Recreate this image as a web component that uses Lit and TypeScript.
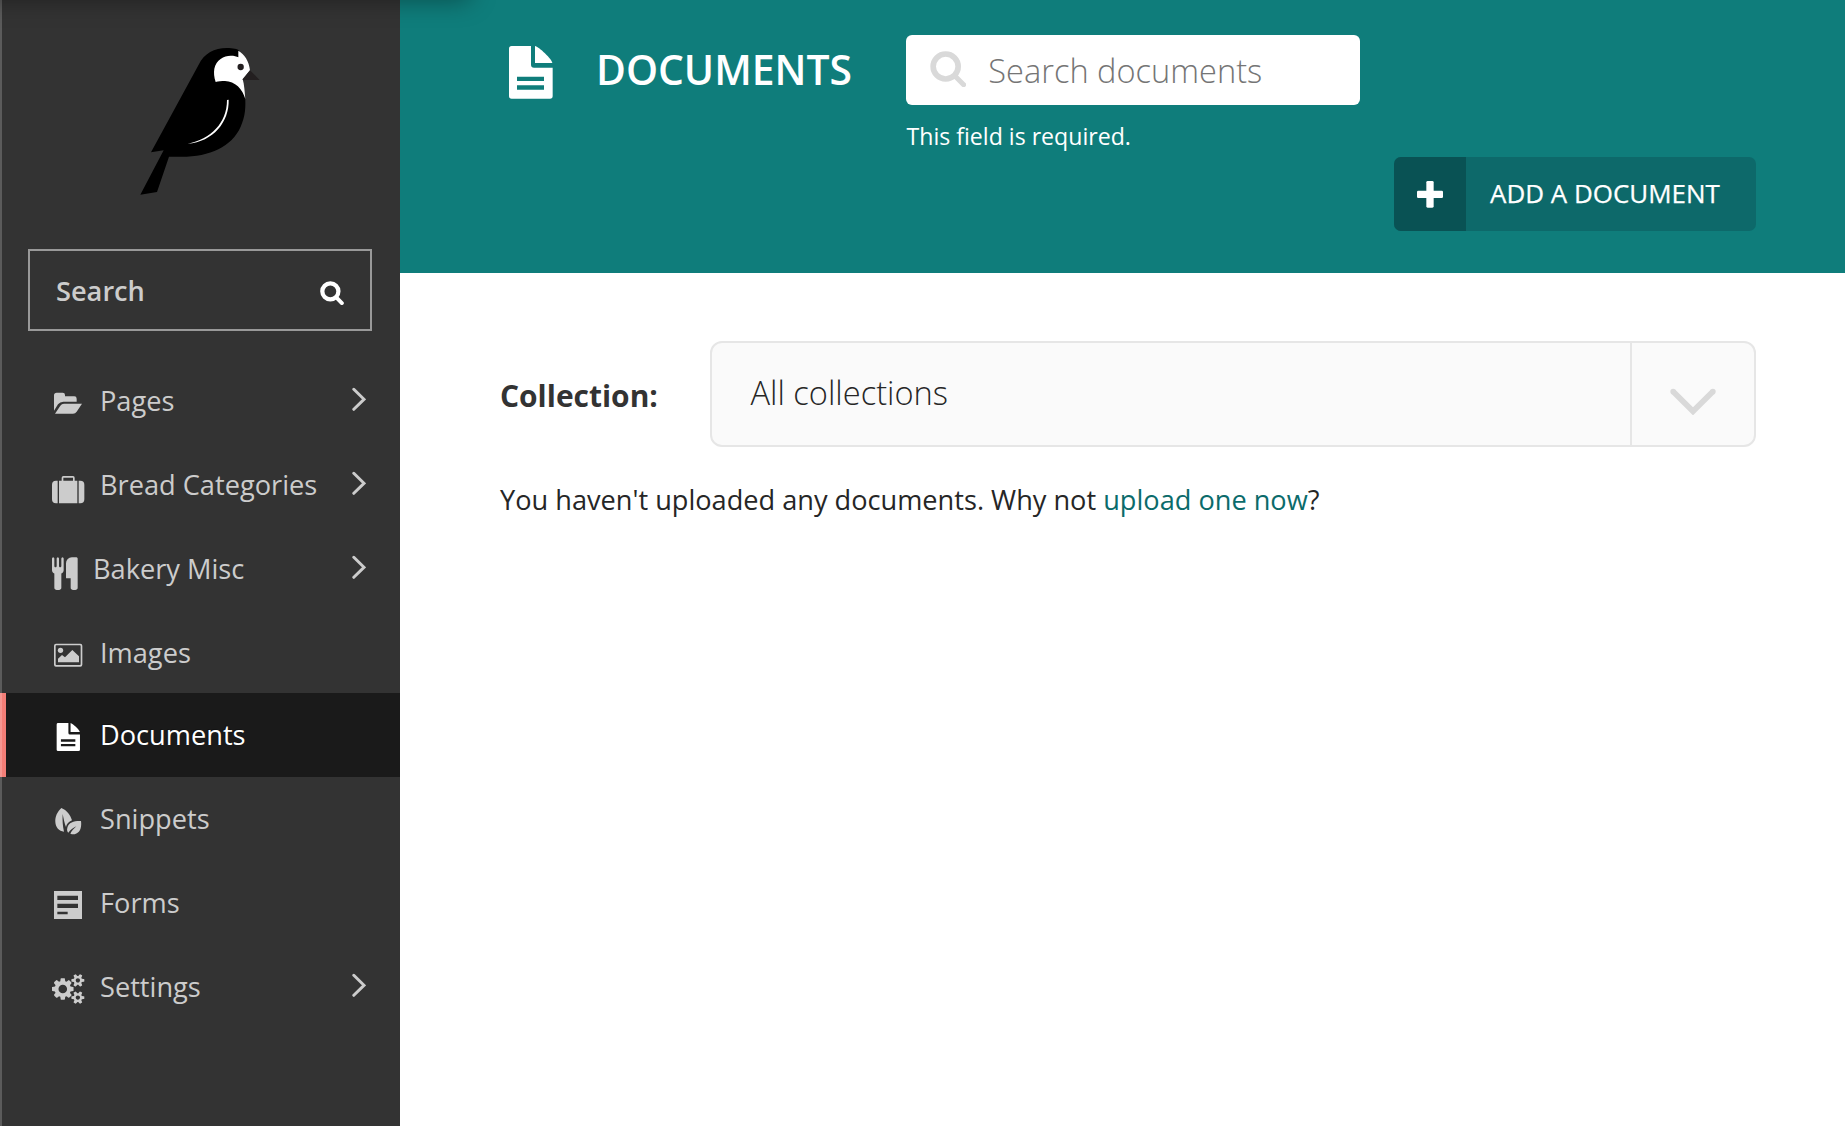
import { LitElement, html, svg, css, nothing, TemplateResult, SVGTemplateResult } from "lit";
import { customElement } from "lit/decorators.js";
import { classMap } from "lit/directives/class-map.js";

interface Icon {
  box: string;
  art: SVGTemplateResult;
}

interface NavItem {
  label: string;
  icon: Icon;
  submenu?: boolean;
  active?: boolean;
  narrow?: boolean;
  tight?: boolean;
}

const documentShape = svg`
  <path d="M165 78C176 80 216 117 217 129H165z"/>
  <path fill-rule="evenodd" d="M95 78H153V134q0 9 9 9H218V228q0 8-8 8H95q-8 0-8-8V86q0-8 8-8zM111 170V183H192V170zM111 196V209H192V196z"/>`;

const icons: Record<string, Icon> = {
  folder: {
    box: "156 468 99 102",
    art: svg`<path d="M162 542V496q0-8 8-8H188q7 0 7 7V499H223q7 0 7 7V515H190q-10 0-16 8z"/>
      <path d="M165 551L181 527q4-6 11-6H246L230 545q-4 6-11 6z"/>`,
  },
  suitcase: {
    box: "156 90 99 102",
    art: svg`<path fill-rule="evenodd" d="M177 122H185V113q0-5 5-5H219q5 0 5 5V122H232V190H177zM190 113V122H219V113z"/>
      <path d="M173 122V190H168q-12 0-12-12V134q0-12 12-12zM236 122H241q12 0 12 12V178q0 12-12 12H236z"/>`,
  },
  cutlery: {
    box: "156 342 99 110",
    art: svg`<path transform="translate(145.5 352) scale(.0547)" d="M832 64v640q0 61-35.5 111t-92.5 70v779q0 52-38 90t-90 38h-128q-52 0-90-38t-38-90v-779q-57-20-92.5-70t-35.5-111v-640q0-26 19-45t45-19 45 19 19 45v416q0 26 19 45t45 19 45-19 19-45v-416q0-26 19-45t45-19 45 19 19 45v416q0 26 19 45t45 19 45-19 19-45v-416q0-26 19-45t45-19 45 19 19 45zm768 0v1600q0 52-38 90t-90 38h-128q-52 0-90-38t-38-90v-512h-224q-13 0-22.5-9.5t-9.5-22.5v-800q0-132 94-226t226-94h256q26 0 45 19t19 45z"/>`,
  },
  image: {
    box: "156 594 99 102",
    art: svg`<path fill-rule="evenodd" d="M168 611H241q6 0 6 6V674q0 6-6 6H168q-6 0-6-6V617q0-6 6-6zM169 616q-2 0-2 2V673q0 2 2 2H240q2 0 2-2V618q0-2-2-2z"/>
      <circle cx="181.500" cy="631" r="8"/>
      <path d="M174 667V656L186 645L195 652L217 630L237 649V667z"/>`,
  },
  document: {
    box: "156 120 99 102",
    art: svg`<g transform="translate(123.500 87.300) scale(.534)">${documentShape}</g>`,
  },
  leaf: {
    box: "156 372 99 102",
    art: svg`<path d="M184 384C172 395 165 410 166 426C167 443 177 453 192 455C188 438 187 420 188 402C191 418 194 432 198 441C200 432 206 426 216 421C212 406 200 390 184 384z"/>
      <path d="M243 423C225 422 206 426 202 443C200 450 202 455 205 458C210 450 220 443 229 439C222 446 214 453 211 461C225 467 238 459 242 445C244 437 244 430 243 423z"/>`,
  },
  form: {
    box: "156 624 99 102",
    art: svg`<path fill-rule="evenodd" d="M162 633H246V717H162zM172 647V660H234V647zM172 671V684H234V671zM172 695V703H203V695z"/>`,
  },
  cogs: {
    box: "156 876 99 102",
    art: svg`<path transform="translate(156 881.700) scale(.0505)" d="M896 896q0-106-75-181t-181-75-181 75-75 181 75 181 181 75 181-75 75-181zm768 512q0-52-38-90t-90-38-90 38-38 90q0 53 37.500 90.500t90.500 37.500 90.500-37.500 37.500-90.500zm0-1024q0-52-38-90t-90-38-90 38-38 90q0 53 37.500 90.500t90.500 37.500 90.500-37.500 37.500-90.500zm-384 421v185q0 10-7 19.500t-16 10.500l-155 24q-11 35-32 76 34 48 90 115 7 11 7 20 0 12-7 19-23 30-82.500 89.500t-78.500 59.500q-11 0-21-7l-115-90q-37 19-77 31-11 108-23 155-7 24-30 24h-186q-11 0-20-7.500t-10-17.500l-23-153q-34-10-75-31l-118 89q-7 7-20 7-11 0-21-8-144-133-144-160 0-9 7-19 10-14 41-53t47-61q-23-44-35-82l-152-24q-10-1-17-9.500t-7-19.500v-185q0-10 7-19.500t16-10.500l155-24q11-35 32-76-34-48-90-115-7-11-7-20 0-12 7-20 22-30 82-89t79-59q11 0 21 7l115 90q34-18 77-32 11-108 23-154 7-24 30-24h186q11 0 20 7.500t10 17.500l23 153q34 10 75 31l118-89q8-7 20-7 11 0 21 8 144 133 144 160 0 8-7 19-12 16-42 54t-45 60q23 48 34 82l152 23q10 2 17 10.500t7 19.500zm640 533v140q0 16-149 31-12 27-30 52 51 113 51 138 0 4-4 7-122 71-124 71-8 0-46-47t-52-68q-20 2-30 2t-30-2q-14 21-52 68t-46 47q-2 0-124-71-4-3-4-7 0-25 51-138-18-25-30-52-149-15-149-31v-140q0-16 149-31 13-29 30-52-51-113-51-138 0-4 4-7 4-2 35-20t59-34 30-16q8 0 46 46.500t52 67.500q20-2 30-2t30 2q51-71 92-112l6-2q4 0 124 70 4 3 4 7 0 25-51 138 17 23 30 52 149 15 149 31zm0-1024v140q0 16-149 31-12 27-30 52 51 113 51 138 0 4-4 7-122 71-124 71-8 0-46-47t-52-68q-20 2-30 2t-30-2q-14 21-52 68t-46 47q-2 0-124-71-4-3-4-7 0-25 51-138-18-25-30-52-149-15-149-31v-140q0-16 149-31 13-29 30-52-51-113-51-138 0-4 4-7 4-2 35-20t59-34 30-16q8 0 46 46.500t52 67.500q20-2 30-2t30 2q51-71 92-112l6-2q4 0 124 70 4 3 4 7 0 25-51 138 17 23 30 52 149 15 149 31z"/>`,
  },
};

const navItems: NavItem[] = [
  { label: "Pages", icon: icons.folder, submenu: true },
  { label: "Bread Categories", icon: icons.suitcase, submenu: true },
  { label: "Bakery Misc", icon: icons.cutlery, submenu: true, narrow: true },
  { label: "Images", icon: icons.image, tight: true },
  { label: "Documents", icon: icons.document, active: true },
  { label: "Snippets", icon: icons.leaf },
  { label: "Forms", icon: icons.form },
  { label: "Settings", icon: icons.cogs, submenu: true },
];

@customElement("app-sidebar")
export class AppSidebar extends LitElement {
  static styles = css`
    :host {
      display: flex;
      flex-direction: column;
      width: 400px;
      box-sizing: border-box;
      background: #333;
      color: #ccc;
      position: relative;
    }
    .edge {
      position: absolute;
      left: 0;
      top: 0;
      bottom: 0;
      width: 2px;
      background: rgba(255, 255, 255, 0.2);
      z-index: 2;
    }
    .logo {
      display: block;
      width: 120px;
      height: 150px;
      margin: 46px 0 53px 140px;
    }
    .search {
      display: flex;
      align-items: center;
      justify-content: space-between;
      box-sizing: border-box;
      height: 82px;
      margin: 0 28px 28px;
      padding: 0 26px;
      border: 2px solid #999;
      font-size: 27.2px;
      font-weight: 600;
      line-height: 80px;
    }
    .search svg {
      width: 24px;
      height: 24px;
      margin-top: 5px;
    }
    .search span {
      height: 78px;
    }
    .item {
      display: flex;
      align-items: flex-start;
      height: 84px;
      padding: 0 34px 0 52px;
      font-size: 27.2px;
      line-height: 84.5px;
    }
    .item.tight {
      height: 82px;
    }
    .item.active {
      background: #1a1a1a;
      color: #fff;
      padding-left: 46px;
      border-left: 6px solid #f37e77;
      text-shadow: -1px -1px 0 rgba(0, 0, 0, 0.3);
    }
    .icon {
      width: 33px;
      height: 34px;
      margin: 27px 15px 0 0;
      fill: currentColor;
      overflow: visible;
      flex: none;
    }
    .narrow .icon {
      margin-right: 8px;
      height: 36.667px;
    }
    .label {
      flex: 1;
      white-space: nowrap;
    }
    .chevron {
      width: 14px;
      height: 24px;
      margin-top: 28px;
      fill: none;
      stroke: currentColor;
      stroke-width: 3;
      stroke-linecap: round;
    }
  `;

  render() {
    return html`
      <div class="edge"></div>
      <svg class="logo" viewBox="60 48 360 450">
        <path d="M93 367L236 104C252 70 284 54 320 54C340 54 352 57 358 62V155L375 196C378 230 376 260 362 290C335 350 270 380 185 380H147L111 486L61 494L131 361z"/>
        <path fill="#fff" d="M355 62C373 73 387 92 390 121L368 147C373 165 374 185 376 207C368 178 345 153 315 153C304 153 295 154 287 156C282 142 281 127 283 116C288 90 312 77 332 77C342 77 350 79 355 82z"/>
        <circle cx="362" cy="111" r="9.500" fill="#231f20"/>
        <path fill="#231f20" d="M390 121L419 150H367z"/>
        <path fill="#fff" d="M321 210L326 209C328 275 280 335 203 341C272 327 321 280 321 210z"/>
      </svg>
      <div class="search">
        <span>Search</span>
        <svg viewBox="960 152 72 73" fill="none" stroke="#fff">
          <circle cx="991" cy="183.500" r="24.500" stroke-width="13"/>
          <path d="M1009 202L1026 219" stroke-width="12" stroke-linecap="round"/>
        </svg>
      </div>
      <nav>
        ${navItems.map(
          (n) => html`<div class=${classMap({ item: true, active: !!n.active, narrow: !!n.narrow, tight: !!n.tight })}>
            <svg class="icon" viewBox=${n.icon.box}>${n.icon.art}</svg>
            <span class="label">${n.label}</span>
            ${n.submenu
              ? html`<svg class="chevron" viewBox="0 0 14 24"><path d="M1.800 2.300L12 12.300L1.800 22.300"/></svg>`
              : nothing}
          </div>`
        )}
      </nav>
    `;
  }
}

@customElement("app-header")
export class AppHeader extends LitElement {
  static styles = css`
    :host {
      display: flex;
      flex-direction: column;
      box-sizing: border-box;
      height: 273px;
      padding: 35px 89px 42px 109px;
      background: #0f7d7b;
      color: #fff;
    }
    .row {
      display: flex;
      align-items: flex-start;
      height: 122px;
    }
    .doc {
      width: 44px;
      height: 53px;
      margin-top: 11px;
      fill: #fff;
    }
    h1 {
      margin: -1px 0 0 43px;
      width: 310px;
      font-size: 40.8px;
      font-weight: 600;
      line-height: 70px;
    }
    .field {
      display: flex;
      box-sizing: border-box;
      width: 454px;
      height: 70px;
      padding-left: 24px;
      border-radius: 6px;
      background: #fff;
      color: #757575;
      font-size: 32.6px;
      font-weight: 300;
      line-height: 72px;
    }
    .field svg {
      width: 36.333px;
      height: 36.333px;
      margin: 15.7px 22px 0 0;
    }
    .help {
      margin: 16px 0 0 0.5px;
      font-size: 23.12px;
      line-height: 30px;
    }
    .add {
      align-self: flex-end;
      display: flex;
      width: 362px;
      height: 74px;
      border-radius: 7px;
      overflow: hidden;
      background: #0d696a;
      font-size: 25.95px;
      line-height: 73px;
      white-space: nowrap;
      -webkit-text-stroke: 0.25px currentColor;
    }
    .plus {
      width: 72px;
      height: 74px;
      margin-right: 24px;
      background: #095254;
      fill: #fff;
    }
  `;

  render(): TemplateResult {
    return html`
      <div class="row">
        <svg class="doc" viewBox="87 78 132 159">${documentShape}</svg>
        <h1>DOCUMENTS</h1>
        <div>
          <div class="field">
            <svg viewBox="90 92 109 109" fill="none" stroke="#d9d9d9">
              <circle cx="137" cy="138.500" r="37.500" stroke-width="17"/>
              <path d="M165 167L191 193" stroke-width="15" stroke-linecap="round"/>
            </svg>
            <span>Search documents</span>
          </div>
          <div class="help">This field is required.</div>
        </div>
      </div>
      <div class="add">
        <svg class="plus" viewBox="72 51 216 222">
          <rect x="141" y="152" width="78" height="22" rx="4"/>
          <rect x="169" y="123" width="22" height="80" rx="4"/>
        </svg>
        <span>ADD A DOCUMENT</span>
      </div>
    `;
  }
}

@customElement("app-root")
export class AppRoot extends LitElement {
  static styles = css`
    :host {
      display: flex;
      position: relative;
      width: 1845px;
      height: 1126px;
      overflow: hidden;
      background: #fff;
      font-family: "Open Sans", "Noto Sans", sans-serif;
      color: #262626;
    }
    .shade {
      position: absolute;
      left: -30px;
      top: -40px;
      width: 500px;
      height: 40px;
      box-shadow: 0 0 26px rgba(0, 0, 0, 0.38);
      z-index: 3;
    }
    main {
      flex: 1;
    }
    .content {
      padding: 68px 89px 0 100px;
    }
    .filter {
      display: flex;
      height: 106px;
    }
    label {
      width: 210px;
      color: #333;
      font-size: 29.95px;
      font-weight: 700;
      line-height: 110px;
    }
    .select {
      flex: 1;
      display: flex;
      justify-content: space-between;
      box-sizing: border-box;
      border: 2px solid #e6e6e6;
      border-radius: 12px;
      background: #fafafa;
      padding-left: 38.5px;
      font-size: 32.64px;
      font-weight: 300;
      line-height: 100px;
    }
    .toggle {
      box-sizing: border-box;
      width: 124px;
      height: 102px;
      border-left: 2px solid #e6e6e6;
      display: flex;
      justify-content: center;
      padding-top: 45px;
    }
    .toggle svg {
      width: 46px;
      height: 27.333px;
    }
    p {
      margin: 33px 0 0;
      font-size: 27.17px;
      line-height: 39px;
    }
    a {
      color: #0b6b6b;
    }
  `;

  render() {
    return html`
      <app-sidebar></app-sidebar>
      <main>
        <app-header></app-header>
        <div class="content">
          <div class="filter">
            <label>Collection:</label>
            <div class="select">
              <span>All collections</span>
              <div class="toggle">
                <svg viewBox="1109 203 138 82" fill="none" stroke="#d9d9d9" stroke-width="17">
                  <path d="M1119 214L1178 273L1237 214"/>
                  <path d="M1118.500 213.500h.1M1237.500 213.500h.1" stroke-linecap="round"/>
                </svg>
              </div>
            </div>
          </div>
          <p>You haven't uploaded any documents. Why not <a>upload one now</a>?</p>
        </div>
      </main>
      <div class="shade"></div>
    `;
  }
}
